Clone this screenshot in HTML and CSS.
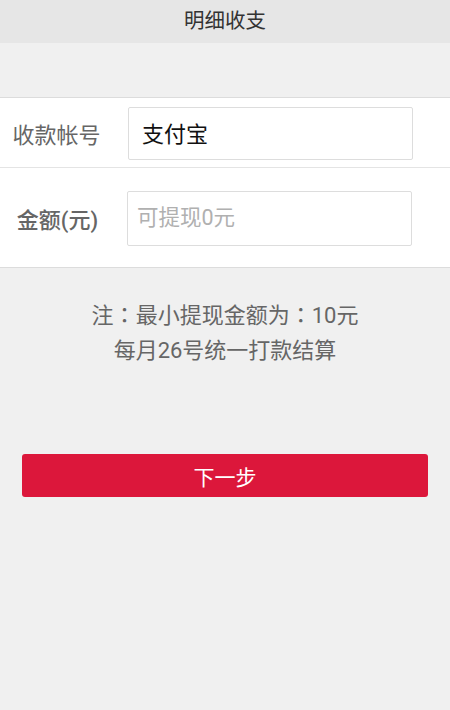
FILE: index.html
```html
<!DOCTYPE html>
<html lang="zh-CN">
<head>
<meta charset="utf-8">
<link rel="stylesheet" href="styles.css">
</head>
<body>
<header class="topbar">明细收支</header>
<div class="spacer"></div>
<section class="form">
  <div class="row row-account">
    <div class="label">收款帐号</div>
    <div class="field"><input class="input" type="text" value="支付宝"></div>
  </div>
  <div class="row row-amount">
    <div class="label label-amount">金额(元)</div>
    <div class="field"><input class="input input-amount" type="text" placeholder="可提现0元"></div>
  </div>
</section>
<div class="note">
  <p>注<span class="punct" lang="zh-TW">：</span>最小提现金额为<span class="punct" lang="zh-TW">：</span>10元</p>
  <p>每月26号统一打款结算</p>
</div>
<div class="actions">
  <button class="btn">下一步</button>
</div>
</body>
</html>
```
FILE: styles.css
```css
* { box-sizing: border-box; }
html, body { margin: 0; padding: 0; }
body {
  background: #f0f0f0;
  font-family: Roboto, "Noto Sans CJK SC", sans-serif;
  width: 450px;
  height: 710px;
  overflow: hidden;
}
.topbar {
  height: 43px;
  background: #e6e6e6;
  color: #333;
  font-size: 20.5px;
  line-height: 43px;
  text-align: center;
}
.spacer { height: 54px; }
.form {
  background: #fff;
  border-top: 1px solid #dcdcdc;
  border-bottom: 1px solid #dcdcdc;
}
.row {
  display: flex;
  align-items: center;
}
.row-account {
  height: 70px;
  border-bottom: 1px solid #e4e4e4;
  padding-top: 1px;
}
.row-amount { height: 99px; padding-top: 1px; }
.label {
  width: 113px;
  text-align: center;
  color: #666;
  font-size: 22px;
  flex: none;
}
.label-amount { padding-left: 2px; font-weight: 500; }
.field { flex: none; }
.row-account .field { margin-left: 15px; }
.row-amount .field { margin-left: 14px; }
.input {
  display: block;
  width: 285px;
  height: 53px;
  border: 1px solid #ddd;
  border-radius: 2px;
  background: #fff;
  font-family: inherit;
  font-size: 22px;
  color: #111;
  padding: 0 13px 3px;
  outline: none;
}
.input-amount { height: 55px; padding: 0 9px 2px; font-size: 21.5px; }
.input-amount::placeholder { color: #b0b0b0; }
.note {
  margin-top: 28px;
  text-align: center;
  color: #666;
  font-size: 22px;
}
.note p { margin: 0; line-height: 35px; }
.punct { font-family: "Noto Sans CJK TC", sans-serif; }
.actions { padding: 0 22px; margin-top: 86px; }
.btn {
  display: block;
  width: 100%;
  height: 43px;
  border: none;
  border-radius: 3px;
  background: #dc173b;
  color: #fff;
  font-family: inherit;
  font-size: 21px;
  cursor: pointer;
}
```
